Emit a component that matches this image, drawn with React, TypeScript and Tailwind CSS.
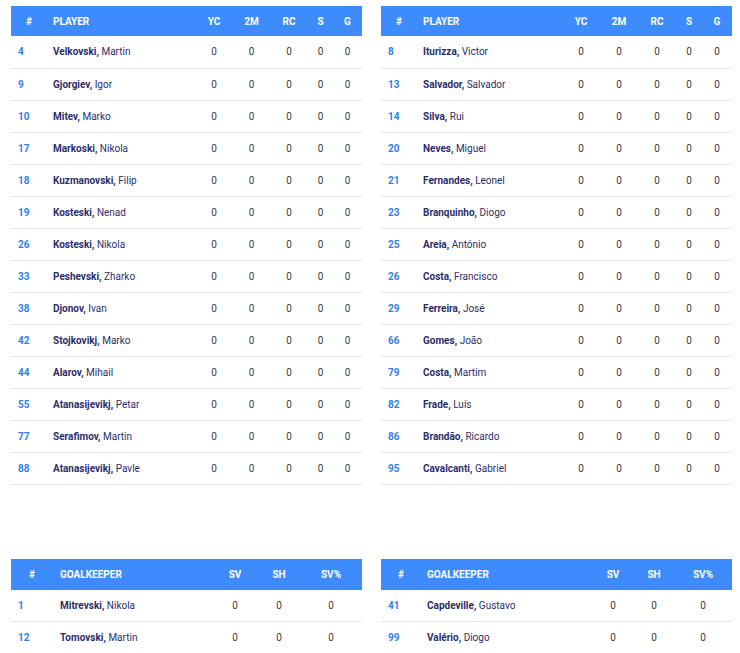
import React from "react";

type P = [string, string, string];

const left: P[] = [
  ["4", "Velkovski", "Martin"],
  ["9", "Gjorgiev", "Igor"],
  ["10", "Mitev", "Marko"],
  ["17", "Markoski", "Nikola"],
  ["18", "Kuzmanovski", "Filip"],
  ["19", "Kosteski", "Nenad"],
  ["26", "Kosteski", "Nikola"],
  ["33", "Peshevski", "Zharko"],
  ["38", "Djonov", "Ivan"],
  ["42", "Stojkovikj", "Marko"],
  ["44", "Alarov", "Mihail"],
  ["55", "Atanasijevikj", "Petar"],
  ["77", "Serafimov", "Martin"],
  ["88", "Atanasijevikj", "Pavle"],
];

const right: P[] = [
  ["8", "Iturizza", "Victor"],
  ["13", "Salvador", "Salvador"],
  ["14", "Silva", "Rui"],
  ["20", "Neves", "Miguel"],
  ["21", "Fernandes", "Leonel"],
  ["23", "Branquinho", "Diogo"],
  ["25", "Areia", "António"],
  ["26", "Costa", "Francisco"],
  ["29", "Ferreira", "José"],
  ["66", "Gomes", "João"],
  ["79", "Costa", "Martim"],
  ["82", "Frade", "Luís"],
  ["86", "Brandão", "Ricardo"],
  ["95", "Cavalcanti", "Gabriel"],
];

const gkLeft: P[] = [
  ["1", "Mitrevski", "Nikola"],
  ["12", "Tomovski", "Martin"],
];
const gkRight: P[] = [
  ["41", "Capdeville", "Gustavo"],
  ["99", "Valério", "Diogo"],
];

function PlayerTable({ rows, widths }: { rows: P[]; widths: number[] }) {
  const stats = ["YC", "2M", "RC", "S", "G"];
  return (
    <table className="w-[351px] table-fixed border-collapse">
      <colgroup>
        {widths.map((w, i) => (
          <col key={i} style={{ width: w }} />
        ))}
      </colgroup>
      <thead>
        <tr className="h-[30px] bg-[#3d8bfd] text-white text-[10px] font-bold">
          <th className="text-center font-bold">#</th>
          <th className="text-left font-bold pl-[6px]">PLAYER</th>
          {stats.map((s) => (
            <th key={s} className="text-center font-bold">
              {s}
            </th>
          ))}
        </tr>
      </thead>
      <tbody>
        {rows.map((r) => (
          <tr key={r[0] + r[1]} className="h-[32px] border-b border-[#e6e6e6] text-[10px]">
            <td className="pl-[7px] text-[#2f80ed] font-bold">{r[0]}</td>
            <td className="pl-[6px] text-[#2b2e6b] whitespace-nowrap">
              <span className="font-bold">{r[1]},</span> {r[2]}
            </td>
            {stats.map((s) => (
              <td key={s} className="text-center text-[#3a3a3a]">
                0
              </td>
            ))}
          </tr>
        ))}
      </tbody>
    </table>
  );
}

function GkTable({ rows, widths, pad }: { rows: P[]; widths: number[]; pad: string }) {
  const stats = ["SV", "SH", "SV%"];
  return (
    <table className="w-[351px] table-fixed border-collapse">
      <colgroup>
        {widths.map((w, i) => (
          <col key={i} style={{ width: w }} />
        ))}
      </colgroup>
      <thead>
        <tr className="h-[31px] bg-[#3d8bfd] text-white text-[10px] font-bold">
          <th className="text-center font-bold">#</th>
          <th className={`text-left font-bold ${pad}`}>GOALKEEPER</th>
          {stats.map((s) => (
            <th key={s} className="text-center font-bold">
              {s}
            </th>
          ))}
        </tr>
      </thead>
      <tbody>
        {rows.map((r) => (
          <tr key={r[0]} className="h-[32px] border-b border-[#e6e6e6] text-[10px]">
            <td className="pl-[7px] text-[#2f80ed] font-bold">{r[0]}</td>
            <td className={`${pad} text-[#2b2e6b] whitespace-nowrap`}>
              <span className="font-bold">{r[1]},</span> {r[2]}
            </td>
            {stats.map((s) => (
              <td key={s} className="text-center text-[#3a3a3a]">
                0
              </td>
            ))}
          </tr>
        ))}
      </tbody>
    </table>
  );
}

export default function App() {
  return (
    <div
      className="w-[740px] h-[653px] overflow-hidden bg-white pt-[6px] pl-[11px]"
      style={{ fontFamily: 'Roboto, "Noto Sans", sans-serif' }}
    >
      <div className="flex gap-[19px]">
        <PlayerTable rows={left} widths={[36, 148, 38, 37, 38, 25, 29]} />
        <PlayerTable rows={right} widths={[36, 145, 38, 38, 38, 26, 30]} />
      </div>
      <div className="flex gap-[19px] mt-[74px]">
        <GkTable rows={gkLeft} widths={[42, 159, 46, 42, 62]} pad="pl-[7px]" />
        <GkTable rows={gkRight} widths={[40, 171, 42, 40, 58]} pad="pl-[6px]" />
      </div>
    </div>
  );
}
